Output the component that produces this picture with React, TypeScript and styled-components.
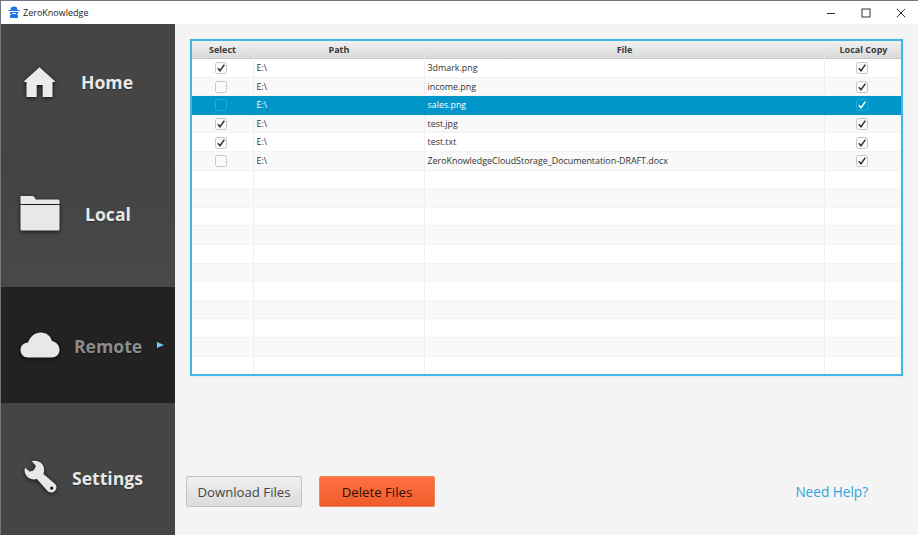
import React from "react";
import styled, { createGlobalStyle } from "styled-components";

const Global = createGlobalStyle`
  html, body { margin: 0; padding: 0; height: 100%; overflow: hidden; }
  #root { height: 100%; }
  * { box-sizing: border-box; }
`;
const Win = styled.div`
  width: 918px; height: 535px; display: flex; flex-direction: column;
  border-top: 1px solid #6f7785; border-left: 1px solid #6f7785;
  background: #f4f4f4; font-family: "Open Sans", "Noto Sans", sans-serif; color: #333;
`;
const TitleBar = styled.div`
  height: 23px; flex: none; background: #fff; display: flex; align-items: center; padding-left: 7px;
`;
const AppName = styled.span`
  font-size: 9px; color: #222; margin-left: 3px;
`;
const WinButtons = styled.div`
  margin-left: auto; display: flex; align-items: center;
`;
const WinBtn = styled.div`
  width: 35px; height: 23px; display: flex; align-items: center; justify-content: center;
`;
const Body = styled.div`
  flex: 1; display: flex; min-height: 0;
`;
const Side = styled.nav`
  width: 174px; flex: none; display: flex; flex-direction: column; background: #454545;
`;
const NavItem = styled.div<{ $h: number; $active?: boolean; $bg?: string }>`
  height: ${p => p.$h}px; flex: none; position: relative; display: flex; align-items: center;
  background: ${p => p.$active ? "#222222" : p.$bg || "#454545"};
`;
const NavIcon = styled.div<{ $l: number; $dy: number }>`
  width: 42px; margin-left: ${p => p.$l}px; display: flex; justify-content: center; transform: translateY(${p => p.$dy}px);
  svg { display: block; filter: drop-shadow(0 1px 2px rgba(0,0,0,.75)); }
`;
const NavLabel = styled.span<{ $l: number; $dy: number; $active?: boolean }>`
  font-size: 17.6px; font-weight: 700; line-height: 24px; margin-left: ${p => p.$l}px;
  transform: translateY(${p => p.$dy}px);
  color: ${p => p.$active ? "#8b8b8b" : "#e8e8e8"};
  text-shadow: 0 1px 1px rgba(0,0,0,.35);
`;
const Arrow = styled.div`
  position: absolute; left: 156px; top: 55px; width: 0; height: 0;
  border-left: 7px solid #6ccdf5; border-top: 3.5px solid transparent; border-bottom: 3.5px solid transparent;
`;
const Main = styled.main`
  flex: 1; display: flex; flex-direction: column; padding: 15px 15px 0 15px; min-width: 0;
`;
const Table = styled.div`
  width: 713px; height: 337px; border: 2px solid #45b6e2; background: #fff; flex: none; overflow: hidden;
  box-shadow: 0 0 1px #9fd8ef;
`;
const Row = styled.div`
  display: grid; grid-template-columns: 62px 171px 400px 77px;
`;
const Head = styled(Row)`
  height: 18px; background: linear-gradient(#f0f0f0, #dadada); border-bottom: 1px solid #c8c8c8;
`;
const HeadCell = styled.div`
  font-size: 9px; font-weight: 700; color: #3a3a3a; text-align: center; line-height: 18px;
  border-right: 1px solid #e6e6e6;
  &:last-child { border-right: none; }
`;
const DataRow = styled(Row)<{ $odd: boolean; $sel?: boolean }>`
  height: 18.6px;
  background: ${p => p.$sel ? "#0096c9" : p.$odd ? "#f9f9f9" : "#fff"};
  color: ${p => p.$sel ? "#fff" : "#333"};
  box-shadow: ${p => p.$sel ? "none" : "inset 0 -1px 0 #f3f3f3"};
`;
const Cell = styled.div<{ $sel?: boolean }>`
  font-size: 8.9px; line-height: 18px; padding-left: 2.5px; white-space: nowrap;
  border-right: 1px solid ${p => p.$sel ? "#0096c9" : "#f0f0f0"};
  &:last-child { border-right: none; }
`;
const CheckCell = styled(Cell)<{ $inset: number }>`
  padding: 0 ${p => p.$inset}px 0 0; display: flex; align-items: center; justify-content: center;
`;
const Box = styled.div<{ $sel?: boolean }>`
  width: 12px; height: 12px; border-radius: 2.5px; display: flex; align-items: center; justify-content: center;
  background: ${p => p.$sel ? "#0096c9" : "#fbfbfb"};
  border: 1px solid ${p => p.$sel ? "#27a9d6" : "#c6c6c6"};
`;
const Footer = styled.div`
  margin-top: 100px; display: flex; align-items: center; height: 31px; margin-left: -4px;
`;
const Btn = styled.div<{ $danger?: boolean }>`
  width: 116px; height: 31px; border-radius: 2px; display: flex; align-items: center; justify-content: center;
  font-size: 13.2px; margin-right: 17px;
  color: ${p => p.$danger ? "#2a1208" : "#444"};
  background: ${p => p.$danger ? "linear-gradient(#fe7141, #ef5c2b)" : "linear-gradient(#efefef, #dcdcdc)"};
  border: 1px solid ${p => p.$danger ? "#f0845c" : "#c2c2c2"};
`;
const Help = styled.span`
  margin-left: auto; margin-right: 35px; font-size: 13.6px; color: #2ea6dc;
`;

const Check = ({ color }: { color: string }) => (
  <svg width="10" height="10" viewBox="0 0 10 10">
    <path d="M1.8 5.2 L4 7.8 L8.4 1.6" fill="none" stroke={color} strokeWidth="1.5" />
  </svg>
);

const files = [
  { name: "3dmark.png", a: true },
  { name: "income.png", a: false },
  { name: "sales.png", a: false, sel: true },
  { name: "test.jpg", a: true },
  { name: "test.txt", a: true },
  { name: "ZeroKnowledgeCloudStorage_Documentation-DRAFT.docx", a: false },
];

export default function App() {
  return (
    <Win>
      <Global />
      <TitleBar>
        <svg width="12" height="13" viewBox="0 0 12 13">
          <path d="M3 1.5 Q6 -0.5 9 1.5 L9.5 4 H11.5 V5 H.5 V4 H2.5Z" fill="#1a78e0" />
          <path d="M2 6 H10 V8 H9 V9 H10 V12 H2 V9 H3 V8 H2Z" fill="#1a78e0" />
          <rect x="4" y="7" width="4" height="1" fill="#fff" />
        </svg>
        <AppName>ZeroKnowledge</AppName>
        <WinButtons>
          <WinBtn>
            <svg width="10" height="10" viewBox="0 0 10 10"><path d="M1 5.5H9" stroke="#333" strokeWidth="1" /></svg>
          </WinBtn>
          <WinBtn>
            <svg width="10" height="10" viewBox="0 0 10 10"><rect x="1" y="1" width="8" height="8" fill="none" stroke="#333" strokeWidth="1" /></svg>
          </WinBtn>
          <WinBtn>
            <svg width="10" height="10" viewBox="0 0 10 10"><path d="M.8.8 9.2 9.2M9.2.8.8 9.2" stroke="#333" strokeWidth="1" /></svg>
          </WinBtn>
        </WinButtons>
      </TitleBar>
      <Body>
        <Side>
          <NavItem $h={132}>
            <NavIcon $l={18} $dy={-8}>
              <svg width="32" height="30" viewBox="0 0 32 30">
                <path d="M15.5 .3 L31 14.3 L30.5 15 H28.5 V30 H18.7 V18 H12.7 V30 H2.5 V15 H.5 L0 14.3Z" fill="#ebebeb" />
              </svg>
            </NavIcon>
            <NavLabel $l={20} $dy={-8}>Home</NavLabel>
          </NavItem>
          <NavItem $h={131} $bg="linear-gradient(#434343,#494949)">
            <NavIcon $l={18} $dy={-8}>
              <svg width="40" height="35" viewBox="0 0 40 35">
                <path d="M1 0 H12 Q14 0 15 2 L15.5 3.5 H38 Q39.5 3.5 39.5 5 V8 H.5 V1 Q.5 0 1 0Z" fill="#e8e8e8" />
                <path d="M.5 9 H39.5 V33 Q39.5 34.5 38 34.5 H2 Q.5 34.5 .5 33Z" fill="#e8e8e8" />
              </svg>
            </NavIcon>
            <NavLabel $l={24} $dy={-8}>Local</NavLabel>
          </NavItem>
          <NavItem $h={116} $active>
            <NavIcon $l={18} $dy={0}>
              <svg width="40" height="26" viewBox="0 0 40 26">
                <path d="M8 25.5 C3.5 25.5 .5 22 .5 18 C.5 14 3.5 11 8 10.6 C10 4.5 15 .5 21 .5 C26.5 .5 30.5 4 32 9 C36.5 10 39.5 13.5 39.5 18 C39.5 22.5 36 25.5 31.5 25.5Z" fill="#e8e8e8" />
              </svg>
            </NavIcon>
            <NavLabel $l={13} $dy={1} $active>Remote</NavLabel>
            <Arrow />
          </NavItem>
          <NavItem $h={131}>
            <NavIcon $l={18} $dy={7.5}>
              <svg width="33" height="34" viewBox="38 30 100 103">
                <path fillRule="evenodd" d="M62 35 C72 32 88 35 95 47 C100 56 100 66 97 74 L132 104 C139 111 137 122 130 127 C123 132 113 130 108 124 L77 89 C68 92 56 90 48 82 C41 75 38 66 41 55 L55 66 C60 68 70 64 74 50 Z M122 112 A5 5 0 1 0 122 122 A5 5 0 1 0 122 112 Z" fill="#e8e8e8" />
              </svg>
            </NavIcon>
            <NavLabel $l={11} $dy={9}>Settings</NavLabel>
          </NavItem>
        </Side>
        <Main>
          <Table>
            <Head>
              <HeadCell>Select</HeadCell>
              <HeadCell>Path</HeadCell>
              <HeadCell>File</HeadCell>
              <HeadCell>Local Copy</HeadCell>
            </Head>
            {Array.from({ length: 17 }, (_, i) => {
              const f = files[i];
              const sel = !!f?.sel;
              const mark = sel ? "#fff" : "#333";
              return (
                <DataRow key={i} $odd={i % 2 === 1} $sel={sel}>
                  <CheckCell $sel={sel} $inset={4}>
                    {f && <Box $sel={sel}>{f.a && <Check color={mark} />}</Box>}
                  </CheckCell>
                  <Cell $sel={sel}>{f ? "E:\\" : ""}</Cell>
                  <Cell $sel={sel}>{f?.name}</Cell>
                  <CheckCell $sel={sel} $inset={4}>
                    {f && <Box $sel={sel}><Check color={mark} /></Box>}
                  </CheckCell>
                </DataRow>
              );
            })}
          </Table>
          <Footer>
            <Btn>Download Files</Btn>
            <Btn $danger>Delete Files</Btn>
            <Help>Need Help?</Help>
          </Footer>
        </Main>
      </Body>
    </Win>
  );
}
